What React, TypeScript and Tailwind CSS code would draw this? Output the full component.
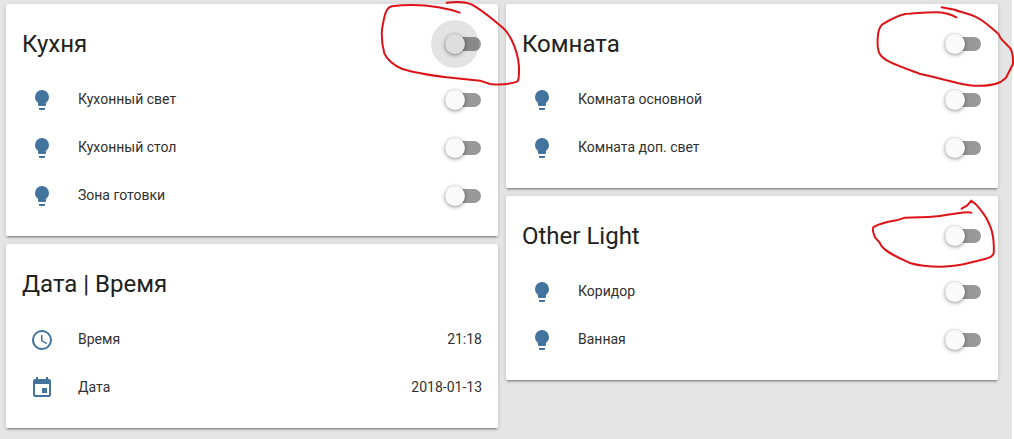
import clsx from "clsx";
import type { ReactNode } from "react";

const iconPaths = {
  bulb: "M12 2A7 7 0 0 0 5 9C5 11.38 6.19 13.47 8 14.74V17A1 1 0 0 0 9 18H15A1 1 0 0 0 16 17V14.74C17.81 13.47 19 11.38 19 9A7 7 0 0 0 12 2M9 21A1 1 0 0 0 10 22H14A1 1 0 0 0 15 21V20H9V21Z",
  clock:
    "M12 20A8 8 0 0 0 20 12A8 8 0 0 0 12 4A8 8 0 0 0 4 12A8 8 0 0 0 12 20M12 2A10 10 0 0 1 22 12A10 10 0 0 1 12 22C6.47 22 2 17.5 2 12A10 10 0 0 1 12 2M12.5 7V12.25L17 14.92L16.25 16.15L11 13V7H12.5Z",
  calendar:
    "M19 19H5V8H19M16 1V3H8V1H6V3H5C3.89 3 3 3.89 3 5V19A2 2 0 0 0 5 21H19A2 2 0 0 0 21 19V5C21 3.89 20.1 3 19 3H18V1M17 12H12V17H17V12Z",
};

type IconName = keyof typeof iconPaths;

function Toggle({ id, label, pressed }: { id?: string; label?: string; pressed?: boolean }) {
  return (
    <input
      type="checkbox"
      role="switch"
      id={id}
      aria-label={label}
      className={clsx(
        "relative mr-px h-3.5 w-9 shrink-0 cursor-pointer appearance-none rounded-full bg-[#999999]",
        "before:absolute before:-top-[3px] before:left-0 before:size-5 before:rounded-full before:bg-[#fafafa] before:shadow-[0_1px_4px_rgba(0,0,0,0.45)] before:transition-transform checked:before:translate-x-4",
        // ripple around the knob
        pressed &&
          "after:absolute after:-top-[17px] after:-left-3.5 after:size-12 after:rounded-full after:bg-black/11"
      )}
    />
  );
}

function Row({ id, icon, name, value }: { id: string; icon: IconName; name: string; value?: string }) {
  return (
    <div className="flex h-12 items-center text-sm text-[#303030]">
      <span className="flex size-10 shrink-0 items-center justify-center">
        <svg viewBox="0 0 24 24" className="size-6 fill-[#44739e]" aria-hidden="true">
          <path d={iconPaths[icon]} />
        </svg>
      </span>
      {value ? (
        <>
          <span className="ml-4 flex-1 pb-0.5">{name}</span>
          <span className="pb-0.5">{value}</span>
        </>
      ) : (
        <>
          <label htmlFor={id} className="ml-4 flex-1 pb-0.5">
            {name}
          </label>
          <Toggle id={id} />
        </>
      )}
    </div>
  );
}

type CardProps = {
  title: string;
  toggle?: boolean;
  pressed?: boolean;
  mark?: ReactNode;
  children: ReactNode;
};

function Card({ title, toggle, pressed, mark, children }: CardProps) {
  return (
    <section className="relative rounded-xs bg-white px-4 pb-4 shadow-[0_2px_2px_rgba(0,0,0,0.14),0_1px_5px_rgba(0,0,0,0.12),0_3px_1px_-2px_rgba(0,0,0,0.2)]">
      <header className="flex items-center justify-between pt-6 pb-4">
        <h2 className="text-2xl leading-8">{title}</h2>
        {toggle && <Toggle label={title} pressed={pressed} />}
      </header>
      {children}
      {mark}
    </section>
  );
}

// Hand-drawn red outline over a card's header switch
function Mark({ className, viewBox, d }: { className: string; viewBox: string; d: string }) {
  return (
    <svg
      viewBox={viewBox}
      className={clsx("pointer-events-none absolute z-10 fill-none stroke-[#dc1418]", className)}
      strokeWidth="6"
      strokeLinecap="round"
      strokeLinejoin="round"
      aria-hidden="true"
    >
      <path d={d} />
    </svg>
  );
}

export default function App() {
  return (
    <div className="min-h-screen border-r-2 border-white bg-[#e5e5e5] font-['Roboto',sans-serif] text-[#212121]">
      <main className="grid grid-cols-2 items-start gap-2 pt-1 pr-3.5 pb-2 pl-1.5">
        <div className="flex flex-col gap-2">
          <Card
            title="Кухня"
            toggle
            pressed
            mark={
              <Mark
                className="-top-1 -right-8 h-[120px] w-40"
                viewBox="0 0 480 360"
                d="M269 38L245 30L205 22C165 15 120 12 65 19C52 22 46 34 42 56L36 88C34 115 36 135 43 160C52 180 70 195 97 207C135 219 175 225 230 232L330 242L360 252C390 256 420 252 443 244C448 235 447 220 447 200C445 170 437 145 425 120C417 105 409 93 400 85C375 63 345 37 310 16C288 4 262 4 230 8"
              />
            }
          >
            <Row id="kitchen-light" icon="bulb" name="Кухонный свет" />
            <Row id="kitchen-table" icon="bulb" name="Кухонный стол" />
            <Row id="cooking-area" icon="bulb" name="Зона готовки" />
          </Card>
          <Card title="Дата | Время">
            <Row id="time" icon="clock" name="Время" value="21:18" />
            <Row id="date" icon="calendar" name="Дата" value="2018-01-13" />
          </Card>
        </div>
        <div className="flex flex-col gap-2">
          <Card
            title="Комната"
            toggle
            mark={
              <Mark
                className="-top-1 -right-4 h-[100px] w-[148px]"
                viewBox="0 0 444 300"
                d="M271 52C255 43 240 38 215 37C180 36 150 39 118 42C95 46 75 57 48 74C39 82 36 95 35 115C34 135 34 150 41 161C52 182 85 193 160 221L200 230L235 239C265 247 295 256 325 257C355 259 380 256 404 246L420 233L433 208L441 192C441 170 441 160 433 145L404 115L398 103C380 87 360 66 332 52C310 41 285 37 268 30C255 25 242 26 227 22"
              />
            }
          >
            <Row id="room-main" icon="bulb" name="Комната основной" />
            <Row id="room-extra" icon="bulb" name="Комната доп. свет" />
          </Card>
          <Card
            title="Other Light"
            toggle
            mark={
              <Mark
                className="-top-1.5 -right-4 h-[90px] w-[154px]"
                viewBox="0 0 462 270"
                d="M334 68C322 63 300 70 240 78C205 82 170 82 135 83L110 91L85 95C65 100 48 105 40 112C35 120 42 132 45 142L59 158L66 170C80 188 110 200 150 219C175 227 210 230 245 230C275 230 305 225 335 217L375 207C390 203 399 198 401 190C403 160 400 135 392 112L382 90C375 75 362 60 350 45L334 32L322 46L305 56"
              />
            }
          >
            <Row id="corridor" icon="bulb" name="Коридор" />
            <Row id="bathroom" icon="bulb" name="Ванная" />
          </Card>
        </div>
      </main>
    </div>
  );
}
